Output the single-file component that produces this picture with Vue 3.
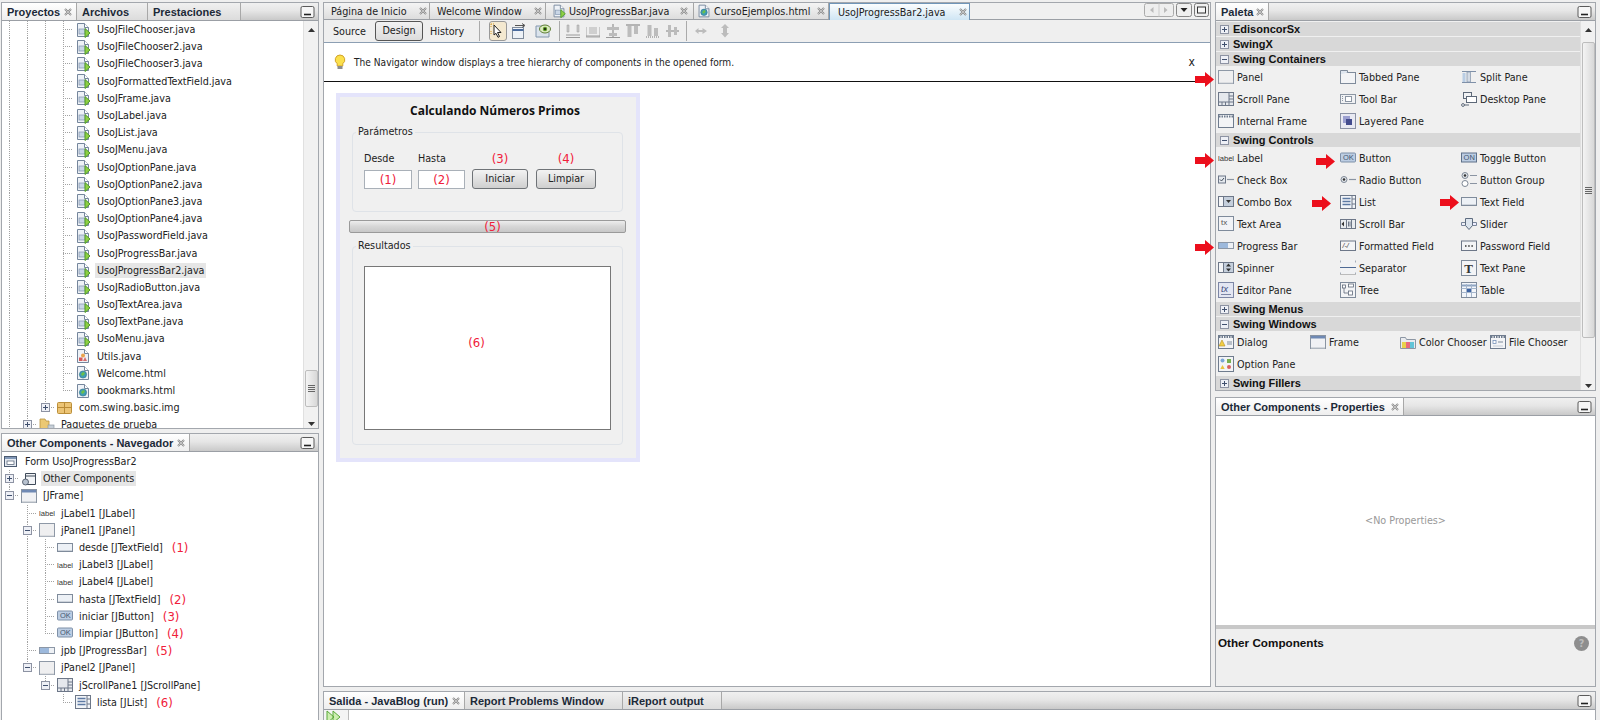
<script setup>
import { h } from 'vue'

const page = '<path d="M2.5 1.5h7l4 4v9h-11z" fill="#eef2f7" stroke="#75869c"/><path d="M9.5 1.5v4h4" fill="#fff" stroke="#75869c"/>'
const icons = {
  java: page + '<rect x="4" y="7" width="6" height="5" fill="#c9d6e6" stroke="#7f93ad" stroke-width=".7"/><path d="M10 6.5l5 4.5-5 4.5z" fill="#8fd044" stroke="#4f9a2a"/>',
  utils: page + '<circle cx="8" cy="7.5" r="2" fill="#e9a34c"/><rect x="4" y="9.5" width="3.5" height="3.5" fill="#d85a5a"/><path d="M10 9l2 4H8z" fill="#d36f6f"/>',
  html: page + '<circle cx="8" cy="9.5" r="3.6" fill="#3f9db5" stroke="#2c6e88" stroke-width=".6"/><path d="M6 9l2-2 2 1-1 2-2 1z" fill="#6cc04a"/>',
  pkg: '<rect x=".5" y="2.5" width="14" height="11" rx="1" fill="#ecc475" stroke="#bb8f3a"/><path d="M7.5 2.5v11M.5 7.5h14" stroke="#b98a35"/>',
  folder: '<path d="M1 2h5l1 2h3v10H1z" fill="#ebc873" stroke="#b8933f" stroke-width=".8"/><rect x="9" y="8" width="6" height="6" fill="#c7cfd8" stroke="#8d98a4" stroke-width=".7"/>',
  form: '<rect x=".5" y="2.5" width="12" height="10" fill="#e6ebf2" stroke="#4b5a70"/><rect x="1" y="3" width="11" height="2" fill="#8298b8"/><rect x="3" y="7" width="7" height="3.5" fill="#fff" stroke="#4b5a70" stroke-width=".7"/>',
  other: '<path d="M4.5 2.5h10v11h-10z" fill="#f2f4f7" stroke="#3f4a59"/><path d="M4.5 5h10" stroke="#3f4a59"/><circle cx="4.5" cy="11" r="3" fill="#b8c2cf" stroke="#3f4a59" stroke-width=".8"/>',
  frame: '<rect x=".5" y="1.5" width="15" height="13" fill="#f0f1f4" stroke="#8a94a2"/><rect x="1" y="2" width="14" height="2.5" fill="#6f89b4"/><rect x="1" y="13" width="14" height="1.5" fill="#d3d7dc"/>',
  panel: '<rect x=".5" y="1.5" width="15" height="13" fill="#efeff0" stroke="#8e98a6"/><path d="M1 14h14" stroke="#c8ccd2"/>',
  textfield: '<rect x=".5" y="3.5" width="15" height="8" fill="#edf1f6" stroke="#7f8b9b"/><path d="M1 10.5h14" stroke="#cdd3db"/>',
  label: '<text x="0" y="11" font-size="7.6" font-family="Liberation Sans" fill="#333">label</text>',
  button: '<rect x=".5" y="3" width="15" height="9" rx="1" fill="#bccde3" stroke="#7f91a8"/><text x="3" y="10.4" font-size="7.5" font-family="Liberation Sans" fill="#44566e">OK</text>',
  toggle: '<rect x=".5" y="3" width="15" height="9" fill="#bccde3" stroke="#5f7189"/><text x="2.6" y="10.4" font-size="7.5" font-family="Liberation Sans" fill="#44566e">ON</text>',
  progress: '<rect x=".5" y="4.5" width="15" height="6" fill="#eef1f5" stroke="#8c97a6"/><rect x="1" y="5" width="9" height="5" fill="#9db9dc"/>',
  scroll: '<rect x=".5" y="1.5" width="15" height="13" fill="#e5e8ed" stroke="#6d7788"/><path d="M11 1.5v13M.5 11h15M4 11v3.5M7.5 11v3.5M11 5h4.5M11 8h4.5" stroke="#6d7788"/>',
  list: '<rect x=".5" y="1.5" width="15" height="13" fill="#f2f5f8" stroke="#6d7788"/><path d="M2.5 4.5h8M2.5 7.5h8M2.5 10.5h8" stroke="#5d7aa3" stroke-width="1.4"/><path d="M12 1.5v13M12 5h3.5M12 10h3.5" stroke="#6d7788"/>',
  tabbed: '<rect x=".5" y="3.5" width="15" height="11" fill="#f3f4f6" stroke="#7f8b9b"/><path d="M.5 5.5v-4h7v2" fill="#dfe6ef" stroke="#7f8b9b"/>',
  split: '<path d="M1 2.5h14M1 13.5h14" stroke="#7f90a8"/><rect x="6" y="3" width="3.5" height="10" fill="#d5dce5" stroke="#7f90a8" stroke-width=".7"/><rect x="1.5" y="4" width="3" height="9" fill="#b9cde4"/>',
  toolbar: '<rect x=".5" y="3.5" width="15" height="9" fill="#f1f2f4" stroke="#8c96a3"/><rect x="5.5" y="5.5" width="6" height="5" fill="#fff" stroke="#8c96a3"/><path d="M2.5 5v6" stroke="#8c96a3" stroke-dasharray="1 1"/>',
  desktop: '<rect x="2.5" y="1.5" width="8" height="6" fill="#f1f2f4" stroke="#5d6878"/><rect x="5.5" y="5.5" width="10" height="6" fill="#fff" stroke="#5d6878"/><circle cx="2" cy="14" r="1.4" fill="#fff" stroke="#5d6878"/><path d="M3 14h5" stroke="#5d6878"/>',
  internal: '<rect x=".5" y="1.5" width="15" height="13" fill="#f3f4f6" stroke="#6f7c8e"/><path d="M1 3.500h14" stroke="#6f7c8e" stroke-width="2" stroke-dasharray="1.500 1"/>',
  layered: '<rect x=".5" y=".5" width="15" height="15" fill="#e8e9f2" stroke="#8b92a5"/><rect x="3" y="3" width="7" height="7" fill="#9b9fd0"/><rect x="6" y="6" width="6" height="6" fill="#444c8e"/>',
  check: '<rect x=".5" y="4" width="7" height="7" fill="#e5e9ee" stroke="#6d7788"/><path d="M2 7.500l1.500 1.500 2.500-3" fill="none" stroke="#3f4a59"/><path d="M9 7.500h7" stroke="#8a94a2" stroke-width="1.200"/>',
  radio: '<circle cx="4" cy="7.500" r="3" fill="#e5e9ee" stroke="#7d8794"/><circle cx="4" cy="7.500" r="1.300" fill="#333"/><path d="M9 7.500h7" stroke="#8a94a2" stroke-width="1.200"/>',
  group: '<circle cx="4" cy="3.500" r="3" fill="#e5e9ee" stroke="#7d8794"/><circle cx="4" cy="3.500" r="1.300" fill="#333"/><circle cx="4" cy="11.500" r="3" fill="#fff" stroke="#7d8794"/><path d="M9 3.500h7M9 11.500h7" stroke="#8a94a2" stroke-width="1.200"/>',
  combo: '<rect x=".5" y="2.500" width="15" height="10" fill="#f4f5f7" stroke="#6d7788"/><rect x="5.500" y="2.500" width="10" height="10" fill="#c5cfdc" stroke="#6d7788"/><path d="M8 6h5l-2.500 3z" fill="#333"/>',
  textarea: '<rect x=".5" y=".5" width="15" height="14" fill="#f2f3f6" stroke="#7f8b9b"/><text x="3" y="9" font-size="8" font-family="Liberation Sans" fill="#555">tx</text>',
  scrollbar: '<rect x=".5" y="3.500" width="15" height="9" fill="#e8ebef" stroke="#6d7788"/><path d="M4 5.500v5L1.500 8z" fill="#333"/><path d="M6.500 3.500v9M11.500 3.500v9M8.500 5.500v5M10 5.500v5" stroke="#6d7788"/>',
  slider: '<path d="M.5 6.500h4M11 6.500h4.500v3H11M.5 6.500v3h4" fill="#eef" stroke="#78859a"/><path d="M4.500 2.500h7v7l-3.500 4-3.500-4z" fill="#dde5ee" stroke="#5e6c80"/>',
  formatted: '<rect x=".5" y="3" width="15" height="9.500" fill="#f3f4f6" stroke="#6d7788"/><text x="2.600" y="10" font-size="7" font-style="italic" font-family="Liberation Sans" fill="#333">/-/</text>',
  password: '<rect x=".5" y="3" width="15" height="9.500" fill="#f3f4f6" stroke="#6d7788"/><path d="M4 8h1.500M7.200 8h1.500M10.400 8h1.500" stroke="#333" stroke-width="1.500"/>',
  spinner: '<rect x=".5" y="2.500" width="15" height="10" fill="#f4f5f7" stroke="#6d7788"/><rect x="5.500" y="2.500" width="10" height="10" fill="#c5cfdc" stroke="#6d7788"/><path d="M8 6.500h5l-2.500-3zM8 8.500h5l-2.500 3z" fill="#333"/>',
  separator: '<rect x=".5" y="0" width="15" height="15" fill="#f1f2f4"/><path d="M.5 .5v2M.5 12.500v2M15.500 .5v2M15.500 12.500v2" stroke="#a5adb8"/><path d="M0 7.500h16" stroke="#4e6a95"/><path d="M0 14.500h16" stroke="#bbb"/>',
  textpane: '<rect x=".5" y=".5" width="15" height="15" fill="#f3f4f6" stroke="#7f8b9b"/><text x="3.200" y="12.500" font-size="13" font-weight="700" font-family="Liberation Serif" fill="#333">T</text>',
  editor: '<rect x=".5" y=".5" width="15" height="15" fill="#e3e6f2" stroke="#7c86a5"/><text x="3" y="10" font-size="9" font-style="italic" font-family="Liberation Sans" fill="#3c4a80">tx</text><path d="M3 12.500h10" stroke="#7c86a5"/>',
  tree: '<rect x=".5" y=".5" width="15" height="15" fill="#f3f4f6" stroke="#7f8b9b"/><rect x="2.500" y="3" width="3" height="3" fill="#fff" stroke="#5d6878" stroke-width=".8"/><rect x="8.500" y="2" width="5" height="3" fill="#fff" stroke="#5d6878" stroke-width=".8"/><rect x="8.500" y="9" width="4" height="4" fill="#fff" stroke="#5d6878" stroke-width=".8"/><path d="M4 6v5h4" fill="none" stroke="#5d6878" stroke-width=".8"/>',
  table: '<rect x=".5" y=".5" width="15" height="15" fill="#f3f6fa" stroke="#7f8b9b"/><path d="M.5 3.500h15" stroke="#8ea5c2" stroke-width="2"/><path d="M.5 6.500h15M.5 10.500h15M5.500 2v13M10.500 2v13" stroke="#a4b5cc"/><rect x="6" y="7" width="4" height="3" fill="#3d63a3"/>',
  dialog: '<rect x=".5" y="1.500" width="15" height="13" fill="#f3f4f6" stroke="#6f7c8e"/><path d="M1 3h14" stroke="#6f7c8e" stroke-width="2" stroke-dasharray="1.500 1"/><path d="M4 6l3 6H1z" fill="#f2cf45" stroke="#b38d1e" stroke-width=".6"/><path d="M9 8h5M9 10h5" stroke="#7f8b9b"/>',
  color: '<path d="M.5 3.500h5l1 2h9v9H.5z" fill="#e9ebef" stroke="#8c96a3"/><rect x="2" y="8" width="4" height="6" fill="#e8d24c"/><rect x="6" y="8" width="4" height="6" fill="#e86a7e"/><rect x="10" y="8" width="4" height="6" fill="#62c4d8"/>',
  filechooser: '<rect x=".5" y="1.500" width="15" height="13" fill="#f3f4f6" stroke="#6f7c8e"/><path d="M1 3h14" stroke="#6f7c8e" stroke-width="2" stroke-dasharray="1.500 1"/><rect x="3" y="6.500" width="3" height="3" fill="#fff" stroke="#7792b8" stroke-width=".8"/><path d="M8 8h5" stroke="#7f8b9b"/><path d="M3 12h10" stroke="#c5ccd6"/>',
  option: '<rect x=".5" y=".5" width="15" height="15" fill="#f3f4f6" stroke="#6f7c8e"/><circle cx="4.500" cy="4.500" r="2" fill="#7aa6d8"/><rect x="9" y="3" width="4" height="4" fill="#78b050"/><path d="M4.500 9l2.200 4H2.300z" fill="#e8c340"/><circle cx="11" cy="11" r="2" fill="#d96060"/>',
  conn: '<rect x=".5" y="4.500" width="11" height="11" fill="#eef2f7" stroke="#7f8b9b"/><path d="M.5 7h11" stroke="#4b6c9e" stroke-width="2"/><path d="M3 2.500h9M10 .5l3 2-3 2" fill="none" stroke="#555"/>',
  select: '<path d="M4 2l7 7.500H7.500l2 4-1.500.8-2-4L4 12z" fill="#fff" stroke="#222"/><path d="M1 1h3M1 1v4M1 8v4" stroke="#d39a2a" stroke-dasharray="1 1"/>',
  eye: '<path d="M1 3h11l2 2v9H1z" fill="#dbe3ec" stroke="#8296ac"/><ellipse cx="10" cy="6" rx="5.500" ry="4" fill="#dcebc0" stroke="#5e7d36"/><circle cx="10" cy="6" r="2.200" fill="#5d9a25"/><circle cx="10" cy="6" r="1" fill="#111"/>',
  a1: '<path d="M1 1v7h2V1zM11 1v7h2V1z" fill="#c9c9c9" stroke="#9a9a9a" stroke-width=".5"/><path d="M0 11h14M0 13.500h14" stroke="#9a9a9a"/>',
  a2: '<path d="M0 3v10h14V3" fill="none" stroke="#a5a5a5"/><rect x="3" y="3" width="8" height="7" fill="#cfcfcf"/><path d="M0 12h14" stroke="#9a9a9a"/>',
  a3: '<path d="M7 0v14" stroke="#a0a0a0" stroke-width="1.400"/><rect x="1" y="3" width="12" height="3" fill="#bcbcbc"/><rect x="3" y="9" width="8" height="3" fill="#bcbcbc"/><path d="M0 13.500h14" stroke="#999"/>',
  a4: '<path d="M0 1h14" stroke="#a0a0a0" stroke-width="1.500"/><rect x="1.500" y="2" width="4" height="11" fill="#bcbcbc"/><rect x="8" y="2" width="4" height="8" fill="#bcbcbc"/>',
  a5: '<path d="M0 13h14" stroke="#a0a0a0" stroke-width="1.400" stroke-dasharray="1 1"/><rect x="1.500" y="1" width="4" height="11" fill="#bcbcbc"/><rect x="8" y="4" width="4" height="8" fill="#bcbcbc"/>',
  a6: '<path d="M0 7h13" stroke="#a0a0a0" stroke-width="1.400"/><rect x="2" y="1" width="3" height="12" fill="#bcbcbc"/><rect x="8" y="3" width="3" height="8" fill="#bcbcbc"/>',
  a7: '<path d="M1 7l3.500-3v2h4V4L13 7l-4.500 3V8h-4v2z" fill="#bcbcbc"/>',
  a8: '<path d="M5 0l4 4H7v5h2l-4 4.500L1 9h2V4H1z" fill="#bcbcbc"/>',
  min: '<rect x="1" y="1.500" width="13" height="11" rx="1.500" fill="#f6f6f6" stroke="#5a5a5a"/><path d="M4 9.500h7" stroke="#222" stroke-width="1.600"/>',
  restore: '<rect x=".5" y=".5" width="14" height="13" rx="2" fill="#efefef" stroke="#777"/><rect x="3.500" y="4" width="8" height="6" fill="#f6f6f6" stroke="#333"/>',
  drop: '<rect x=".5" y=".5" width="15" height="13" rx="2" fill="#efefef" stroke="#888"/><path d="M4.500 5h7l-3.500 4z" fill="#222"/>',
  navs: '<rect x=".5" y=".5" width="29" height="13" rx="2" fill="#eeeeee" stroke="#aaa"/><path d="M15 .5v13" stroke="#ccc"/><path d="M9.500 4v6L6 7zM20 4v6l3.500-3z" fill="#bbb"/>',
  close: '<path d="M1 1l6 6M7 1L1 7" stroke="#8a8a8a" stroke-width="2" fill="none"/><path d="M1 1l6 6M7 1L1 7" stroke="#e8e8e8" stroke-width=".6" fill="none"/>',
  bulb: '<path d="M7 1a4.800 4.800 0 0 0-2.800 8.700V12h5.600V9.700A4.800 4.800 0 0 0 7 1z" fill="#fbe04c" stroke="#d2a32a"/><rect x="4.500" y="12" width="5" height="3" fill="#8c8c8c"/>',
  run: '<path d="M1 1l7 6-7 6zM7 1l7 6-7 6z" fill="#cdeeb0" stroke="#5aa83a"/>',
  plus: '<rect x=".5" y=".5" width="8" height="8" fill="#eef0f6" stroke="#8d93a3"/><path d="M2 4.500h5M4.500 2v5" stroke="#40506e"/>',
  minus: '<rect x=".5" y=".5" width="8" height="8" fill="#eef0f6" stroke="#8d93a3"/><path d="M2 4.500h5" stroke="#40506e"/>',
  up: '<path d="M3 7h7L6.500 3z" fill="#333"/>',
  down: '<path d="M3 4h7L6.500 8z" fill="#333"/>',
  grip: '<path d="M2 1.500h7M2 3.500h7M2 5.500h7M2 7.500h7" stroke="#666"/>',
  arrow: '<path d="M0 4h10V0l9 7.500-9 7.500v-4H0z" fill="#ec0f1c"/>'
}
const sizes = { plus: [9, 9], minus: [9, 9], close: [8, 8], up: [13, 10], down: [13, 10], grip: [11, 9], arrow: [19, 15], navs: [30, 14], drop: [16, 14], restore: [15, 14], min: [15, 14], a1: [14, 14], a2: [14, 14], a3: [14, 14], a4: [14, 14], a5: [14, 14], a6: [14, 14], a7: [14, 14], a8: [10, 14], bulb: [14, 16] }
const Icon = (props) => {
  const [w, ht] = sizes[props.n] || [16, 16]
  return h('svg', { width: w, height: ht, viewBox: `0 0 ${w} ${ht}`, innerHTML: icons[props.n], style: 'flex:none;display:block' })
}
Icon.props = ['n']

const javaNames = ['UsoJFileChooser', 'UsoJFileChooser2', 'UsoJFileChooser3', 'UsoJFormattedTextField', 'UsoJFrame', 'UsoJLabel', 'UsoJList', 'UsoJMenu', 'UsoJOptionPane', 'UsoJOptionPane2', 'UsoJOptionPane3', 'UsoJOptionPane4', 'UsoJPasswordField', 'UsoJProgressBar', 'UsoJProgressBar2', 'UsoJRadioButton', 'UsoJTextArea', 'UsoJTextPane', 'UsoMenu']
const projectRows = [
  ...javaNames.map((n) => ({ d: 3, g: [0, 1, 2], icon: 'java', t: n + '.java', sel: n === 'UsoJProgressBar2' })),
  { d: 3, g: [0, 1, 2], icon: 'utils', t: 'Utils.java' },
  { d: 3, g: [0, 1, 2], icon: 'html', t: 'Welcome.html' },
  { d: 3, g: [0, 1, 2], icon: 'html', t: 'bookmarks.html', last: true },
  { d: 2, g: [0, 1], icon: 'pkg', t: 'com.swing.basic.img', box: 'plus', last: true },
  { d: 1, g: [0], icon: 'folder', t: 'Paquetes de prueba', box: 'plus' }
]
const navRows = [
  { d: -1, g: [], icon: 'form', t: 'Form UsoJProgressBar2' },
  { d: 0, g: [], icon: 'other', t: 'Other Components', box: 'plus', sel: true },
  { d: 0, g: [], icon: 'frame', t: '[JFrame]', box: 'minus', last: true },
  { d: 1, g: [], icon: 'label', t: 'jLabel1 [JLabel]' },
  { d: 1, g: [], icon: 'panel', t: 'jPanel1 [JPanel]', box: 'minus' },
  { d: 2, g: [1], icon: 'textfield', t: 'desde [JTextField]', note: '(1)' },
  { d: 2, g: [1], icon: 'label', t: 'jLabel3 [JLabel]' },
  { d: 2, g: [1], icon: 'label', t: 'jLabel4 [JLabel]' },
  { d: 2, g: [1], icon: 'textfield', t: 'hasta [JTextField]', note: '(2)' },
  { d: 2, g: [1], icon: 'button', t: 'iniciar [JButton]', note: '(3)' },
  { d: 2, g: [1], icon: 'button', t: 'limpiar [JButton]', note: '(4)', last: true },
  { d: 1, g: [], icon: 'progress', t: 'jpb [JProgressBar]', note: '(5)' },
  { d: 1, g: [], icon: 'panel', t: 'jPanel2 [JPanel]', box: 'minus', last: true },
  { d: 2, g: [], icon: 'scroll', t: 'jScrollPane1 [JScrollPane]', box: 'minus', last: true },
  { d: 3, g: [], icon: 'list', t: 'lista [JList]', note: '(6)', last: true }
]
const centerTabs = [
  { t: 'Página de Inicio', w: 106, pad: 7, cm: 2 },
  { t: 'Welcome Window', w: 116, pad: 7, cm: 3 },
  { t: 'UsoJProgressBar.java', w: 148, pad: 5, cm: 5, icon: 'java' },
  { t: 'CursoEjemplos.html', w: 135, pad: 2, cm: 3, icon: 'html' },
  { t: 'UsoJProgressBar2.java', w: 141, pad: 8, cm: 2, active: true }
]
const alignIcons = ['a1', 'a2', 'a3', 'a4', 'a5', 'a6']
const palette = [
  { t: 'EdisoncorSx' },
  { t: 'SwingX' },
  { t: 'Swing Containers', open: true, items: [['panel', 'Panel'], ['tabbed', 'Tabbed Pane'], ['split', 'Split Pane'], ['scroll', 'Scroll Pane'], ['toolbar', 'Tool Bar'], ['desktop', 'Desktop Pane'], ['internal', 'Internal Frame'], ['layered', 'Layered Pane']] },
  { t: 'Swing Controls', open: true, items: [['label', 'Label'], ['button', 'Button'], ['toggle', 'Toggle Button'], ['check', 'Check Box'], ['radio', 'Radio Button'], ['group', 'Button Group'], ['combo', 'Combo Box'], ['list', 'List'], ['textfield', 'Text Field'], ['textarea', 'Text Area'], ['scrollbar', 'Scroll Bar'], ['slider', 'Slider'], ['progress', 'Progress Bar'], ['formatted', 'Formatted Field'], ['password', 'Password Field'], ['spinner', 'Spinner'], ['separator', 'Separator'], ['textpane', 'Text Pane'], ['editor', 'Editor Pane'], ['tree', 'Tree'], ['table', 'Table']] },
  { t: 'Swing Menus' },
  { t: 'Swing Windows', open: true, win: true, items: [['dialog', 'Dialog'], ['frame', 'Frame'], ['color', 'Color Chooser'], ['filechooser', 'File Chooser'], ['option', 'Option Pane']] },
  { t: 'Swing Fillers' }
]
const arrows = [
  { x: 1195, y: 72 }, { x: 1195, y: 153 }, { x: 1316, y: 154 }, { x: 1312, y: 196 }, { x: 1440, y: 195 }, { x: 1195, y: 240 }
]
</script>

<template>
  <div class="app">
    <div class="leftcol">
      <section class="panel projects">
        <div class="tabbar">
          <div class="tab on" style="width:75px"><b>Proyectos</b><Icon n="close" class="cl" /></div>
          <div class="tab" style="width:71px"><b>Archivos</b></div>
          <div class="tab" style="width:93px"><b>Prestaciones</b></div>
          <div class="fill"></div>
          <Icon n="min" class="minb" />
        </div>
        <div class="pane">
          <div class="tree">
            <div v-for="r in projectRows" :key="r.t" class="row">
              <span v-for="i in r.d" :key="i" class="cell" :class="{ g: r.g.includes(i - 1) }"></span>
              <span class="cell e" :class="{ last: r.last }"><Icon v-if="r.box" :n="r.box" /></span>
              <span class="ti"><Icon :n="r.icon" /></span>
              <span class="tx" :class="{ sel: r.sel }">{{ r.t }}</span>
            </div>
          </div>
          <div class="sb">
            <Icon n="up" />
            <div class="track" style="height:335px"></div>
            <div class="thumb" style="height:37px"><Icon n="grip" /></div>
            <div class="track grow"></div>
            <Icon n="down" />
          </div>
        </div>
      </section>
      <section class="panel nav">
        <div class="tabbar">
          <div class="tab on" style="width:188px"><b>Other Components - Navegador</b><Icon n="close" class="cl" /></div>
          <div class="fill"></div>
          <Icon n="min" class="minb" />
        </div>
        <div class="pane navpane">
          <div class="tree">
            <div v-for="r in navRows" :key="r.t" class="row">
              <template v-if="r.d >= 0">
                <span v-for="i in r.d" :key="i" class="cell" :class="{ g: r.g.includes(i - 1) }"></span>
                <span class="cell e" :class="{ last: r.last }"><Icon v-if="r.box" :n="r.box" /></span>
                <span class="ti"><Icon :n="r.icon" /></span>
              </template>
              <span v-else class="ti top"><Icon :n="r.icon" /></span>
              <span class="tx" :class="{ sel: r.sel }">{{ r.t }}</span>
              <span v-if="r.note" class="note nn">{{ r.note }}</span>
            </div>
          </div>
        </div>
      </section>
    </div>

    <div class="main">
      <div class="upper">
        <section class="panel center">
          <div class="tabbar ctabs">
            <div v-for="t in centerTabs" :key="t.t" class="ctab" :class="{ act: t.active }" :style="{ width: t.w + 'px', paddingLeft: t.pad + 'px' }">
              <Icon v-if="t.icon" :n="t.icon" class="ct-i" />
              <span>{{ t.t }}</span>
              <Icon n="close" class="cl" :style="{ marginRight: t.cm + 'px' }" />
            </div>
            <div class="fill plain"></div>
            <div class="ctl">
              <Icon n="navs" /><Icon n="drop" /><Icon n="restore" />
            </div>
          </div>
          <div class="toolbar">
            <span class="tb-t first">Source</span>
            <span class="tb-t design">Design</span>
            <span class="tb-t hist">History</span>
            <span class="sep"></span>
            <span class="selbox"><Icon n="select" /></span>
            <Icon n="conn" class="t7" />
            <Icon n="eye" class="t8" />
            <span class="sep s2"></span>
            <Icon v-for="a in alignIcons" :key="a" :n="a" class="t6" />
            <span class="sep s3"></span>
            <Icon n="a7" class="t8" />
            <Icon n="a8" class="t12" />
          </div>
          <div class="infobar">
            <Icon n="bulb" />
            <span class="info">The Navigator window displays a tree hierarchy of components in the opened form.</span>
            <span class="x">x</span>
          </div>
          <div class="canvas">
            <div class="form">
              <div class="title">Calculando Números Primos</div>
              <fieldset class="fs fs1">
                <legend>Parámetros</legend>
                <div class="params">
                  <span>Desde</span><span>Hasta</span>
                  <span class="note mid c3">(3)</span><span class="note mid c4">(4)</span>
                  <span class="input note">(1)</span><span class="input note">(2)</span>
                  <span class="btn c3">Iniciar</span><span class="btn c4">Limpiar</span>
                </div>
              </fieldset>
              <div class="pbar"><span class="note">(5)</span></div>
              <fieldset class="fs fs2">
                <legend>Resultados</legend>
                <div class="jlist"><span class="note six">(6)</span></div>
              </fieldset>
            </div>
          </div>
        </section>

        <div class="rightcol">
          <section class="panel pal">
            <div class="tabbar">
              <div class="tab on" style="width:53px"><b>Paleta</b><Icon n="close" class="cl" /></div>
              <div class="fill"></div>
              <Icon n="min" class="minb" />
            </div>
            <div class="pane">
              <div class="pal-body">
                <template v-for="c in palette" :key="c.t">
                  <div class="cat"><Icon :n="c.open ? 'minus' : 'plus'" /><b>{{ c.t }}</b></div>
                  <div v-if="c.items" class="pal-grid" :class="{ win: c.win }">
                    <div v-for="it in c.items" :key="it[1]" class="pitem"><Icon :n="it[0]" /><span>{{ it[1] }}</span></div>
                  </div>
                </template>
              </div>
              <div class="sb">
                <Icon n="up" />
                <div class="track" style="height:7px"></div>
                <div class="thumb" style="height:296px"><Icon n="grip" /></div>
                <div class="track grow"></div>
                <Icon n="down" />
              </div>
            </div>
          </section>
          <section class="panel props">
            <div class="tabbar">
              <div class="tab on" style="width:188px"><b>Other Components - Properties</b><Icon n="close" class="cl" /></div>
              <div class="fill"></div>
              <Icon n="min" class="minb" />
            </div>
            <div class="noprops">&lt;No Properties&gt;</div>
            <div class="help"><b>Other Components</b><span class="q">?</span></div>
          </section>
        </div>
      </div>
      <section class="panel output">
        <div class="tabbar">
          <div class="tab on" style="width:141px"><b>Salida - JavaBlog (run)</b><Icon n="close" class="cl" /></div>
          <div class="tab" style="width:158px"><b>Report Problems Window</b></div>
          <div class="tab" style="width:99px"><b>iReport output</b></div>
          <div class="fill"></div>
          <Icon n="min" class="minb" />
        </div>
        <div class="out-body"><span class="runcol"><Icon n="run" /></span></div>
      </section>
    </div>

    <Icon v-for="(a, i) in arrows" :key="i" n="arrow" class="redarrow" :style="{ left: a.x + 'px', top: a.y + 'px', position: 'absolute' }" />
  </div>
</template>

<style>
html, body { margin: 0; padding: 0; background: #efefef; }
</style>

<style scoped>
.app {
  position: relative;
  width: 1600px;
  height: 720px;
  overflow: hidden;
  display: flex;
  background: #efefef;
  font-family: "DejaVu Sans", "Liberation Sans", sans-serif;
  font-stretch: condensed;
  font-size: 10.7px;
  color: #222;
  box-sizing: border-box;
  padding: 2px 4px 0 1px;
}
.leftcol { width: 318px; flex: none; display: flex; flex-direction: column; margin-right: 4px; }
.main { flex: 1; display: flex; flex-direction: column; min-width: 0; }
.upper { height: 685px; flex: none; display: flex; }
.rightcol { width: 381px; flex: none; display: flex; flex-direction: column; margin-left: 4px; }
.panel { border: 1px solid #a3a7ad; background: #fff; box-sizing: border-box; display: flex; flex-direction: column; overflow: hidden; }
.projects { height: 427px; flex: none; }
.nav { margin-top: 4px; flex: 1; border-bottom: 0; }
.center { flex: 1; min-width: 0; }
.pal { height: 389px; flex: none; }
.props { margin-top: 6px; flex: 1; }
.output { margin-top: 4px; flex: 1; border-bottom: 0; }

.tabbar { height: 17px; flex: none; display: flex; background: linear-gradient(#f0f0f0 0, #e6e6e6 45%, #c9c9c9 100%); border-bottom: 1px solid #9b9fa5; }
.tab { box-sizing: border-box; height: 17px; display: flex; align-items: center; padding-left: 5px; border-right: 1px solid #a8a8a8; background: linear-gradient(#f0f0f0, #dcdcdc); white-space: nowrap; }
.tab.on { background: linear-gradient(#fff, #eeeeee); }
.tab b { font: 700 11px "Liberation Sans", sans-serif; color: #1c2a38; }
.fill { flex: 1; }
.plain { background: #f0f0f0; }
.cl { margin-left: auto; margin-right: 4px; }
.minb { margin: 2px 3px 0 0; }

.pane { flex: 1; display: flex; min-height: 0; background: #fff; }
.tree { flex: 1; overflow: hidden; min-width: 0; margin-left: -2px; }
.navpane { padding-top: 1px; }
.row { height: 17.2px; display: flex; align-items: center; white-space: nowrap; }
.cell { width: 18px; height: 100%; flex: none; display: flex; align-items: center; justify-content: center; }
.g { background: repeating-linear-gradient(to bottom, #a3a3a3 0 1px, transparent 1px 2px) 9px 0 / 1px 100% no-repeat; }
.e {
  background:
    repeating-linear-gradient(to right, #a3a3a3 0 1px, transparent 1px 2px) 9px 50% / 9px 1px no-repeat,
    repeating-linear-gradient(to bottom, #a3a3a3 0 1px, transparent 1px 2px) 9px 0 / 1px 100% no-repeat;
}
.e.last {
  background:
    repeating-linear-gradient(to right, #a3a3a3 0 1px, transparent 1px 2px) 9px 50% / 9px 1px no-repeat,
    repeating-linear-gradient(to bottom, #a3a3a3 0 1px, transparent 1px 2px) 9px 0 / 1px 50% no-repeat;
}
.ti { width: 25px; flex: none; display: flex; padding-left: 3px; box-sizing: border-box; }
.ti.top { padding-left: 4px; }
.tx { padding: 1px 2px; margin-left: -2px; }
.tx.sel { background: #e6e6e6; }
.note { color: #f0203a; font-size: 13px; }
.nn { margin-left: 7px; }

.sb { width: 15px; flex: none; display: flex; flex-direction: column; align-items: center; background: #f1f1f1; border-left: 1px solid #e0e0e0; padding-top: 4px; box-sizing: border-box; }
.track { width: 100%; }
.track.grow { flex: 1; }
.thumb { width: 13px; flex: none; box-sizing: border-box; border: 1px solid #bdbdbd; border-radius: 2px; display: flex; align-items: center; justify-content: center; background: linear-gradient(to right, #f4f4f4, #d8d8d8); }

.ctabs { height: 16px; background: #f0f0f0; }
.ctab { box-sizing: border-box; height: 16px; display: flex; align-items: center; border-right: 1px solid #a6a6a6; background: linear-gradient(#f4f4f4, #dddddd); white-space: nowrap; }
.ctab.act { background: linear-gradient(#fbfdfe, #cfe5f4); border: 1px solid #6f95b8; border-bottom: 0; height: 17px; }
.ct-i { margin-right: 2px; transform: scale(.9); }
.ctl { display: flex; gap: 2px; padding: 0 1px 0 0; }
.toolbar { height: 23px; flex: none; display: flex; align-items: center; background: #efefef; border-bottom: 1px solid #8c9fb3; box-sizing: border-box; padding-left: 9px; }
.tb-t { display: block; }
.design { box-sizing: border-box; width: 48px; height: 20px; line-height: 18px; text-align: center; margin-left: 9px; border: 1px solid #555; border-radius: 3px; background: linear-gradient(#f2f2f2, #dcdcdc); }
.hist { margin-left: 7px; }
.sep { width: 1px; height: 20px; background: #aaa; margin-left: 15px; }
.selbox { box-sizing: border-box; margin-left: 9px; width: 18px; height: 20px; border: 1px solid #999; border-radius: 3px; background: #f4e9d0; display: flex; align-items: center; justify-content: center; }
.t7 { margin-left: 5px; }
.t8 { margin-left: 7px; }
.t12 { margin-left: 12px; }
.s2 { margin-left: 8px; }
.t6 { margin-left: 6px; }
.s3 { margin-left: 6px; }
.infobar { height: 38px; flex: none; display: flex; align-items: center; background: #fff; border-bottom: 1.5px solid #111; padding-left: 9px; box-sizing: content-box; }
.info { margin-left: 7px; font-size: 10.1px; }
.x { margin-left: auto; margin-right: 15px; font-size: 12px; }
.canvas { flex: 1; background: #fff; padding: 11px 0 0 12px; }
.form { box-sizing: border-box; width: 304px; height: 369px; border: 4px solid #e4e4fb; background: #f0f0f0; }
.title { height: 28px; line-height: 28px; padding-left: 70px; font-weight: 700; font-size: 12px; color: #111; font-stretch: normal; font-family: "Open Sans", "Liberation Sans", sans-serif; }
.fs { box-sizing: border-box; margin: 0 0 0 12px; width: 271px; padding: 0; border: 1px solid #dfe3e8; border-radius: 4px; min-width: 0; }
.fs legend { margin-left: 3px; padding: 0 2px; line-height: 14px; }
.fs1 { height: 87px; }
.params { display: grid; grid-template-columns: 48px 47px 57px 62px; column-gap: 6px; row-gap: 4px; grid-template-rows: 14px 20px; padding: 12px 0 0 11px; align-items: center; }
.c3 { margin-left: 1px; }
.c4 { margin-left: 2px; }
.mid { text-align: center; }
.input { box-sizing: border-box; height: 19px; line-height: 17px; text-align: center; background: #fff; border: 1px solid #a9b0b8; }
.btn { box-sizing: border-box; height: 20px; line-height: 18px; text-align: center; border: 1px solid #6f7377; border-radius: 3px; background: linear-gradient(#f3f3f3, #cfcfcf); }
.pbar { box-sizing: border-box; margin: 8px 0 0 9px; width: 277px; height: 13px; border: 1px solid #9a9a9a; border-radius: 2px; background: linear-gradient(#ededed, #d6d6d6 50%, #c8c8c8); text-align: center; line-height: 11px; padding-left: 10px; }
.fs2 { height: 206px; margin-top: 6px; }
.jlist { box-sizing: border-box; margin: 13px 0 0 11px; width: 247px; height: 164px; background: #fff; border: 1px solid #777; display: flex; align-items: center; justify-content: center; }
.six { margin: 0 22px 12px 0; }

.pal-body { flex: 1; min-width: 0; overflow: hidden; background: #f0f0f0; padding-top: 1px; }
.cat { height: 14px; margin-bottom: 1px; background: #d8d8d8; display: flex; align-items: center; gap: 4px; padding-left: 4px; }
.cat b { font: 700 11px "Liberation Sans", sans-serif; color: #111; }
.pal-grid { display: grid; grid-template-columns: 122px 121px 1fr; grid-auto-rows: 22px; margin: -1px 0 1px; padding-left: 2px; }
.pal-grid.win { grid-template-columns: 92px 90px 90px 1fr; }
.pitem { display: flex; align-items: center; gap: 3px; white-space: nowrap; }
.noprops { flex: 1; display: flex; align-items: center; justify-content: center; color: #999; background: #fff; border-bottom: 4px solid #c8c8c8; }
.help { height: 57px; flex: none; box-sizing: border-box; background: #efefef; display: flex; justify-content: space-between; padding: 7px 6px 0 2px; }
.help b { font: 700 11.7px "Liberation Sans", sans-serif; color: #111; }
.q { width: 15px; height: 15px; border-radius: 50%; background: #8e8e8e; color: #bcbcbc; text-align: center; font-weight: 700; line-height: 15px; }
.out-body { flex: 1; background: #fff; display: flex; }
.runcol { width: 22px; background: #f4f4f4; border-right: 1px solid #bbb; padding-left: 2px; }
</style>
